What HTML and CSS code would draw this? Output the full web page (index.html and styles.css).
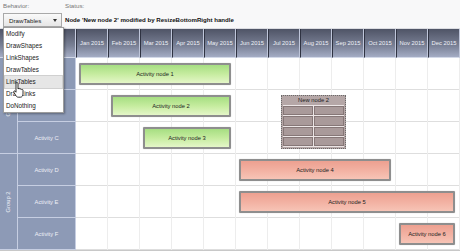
FILE: index.html
```html
<!DOCTYPE html>
<html lang="en">
<head>
    <meta charset="UTF-8">
    <meta name="viewport" content="width=device-width, initial-scale=1.0">
    <title>Gantt Behaviors</title>
    <link rel="stylesheet" href="styles.css">
</head>
<body>
    <div class="toolbar">
        <div class="field behavior">
            <div class="label">Behavior:</div>
            <div class="select">
                <span>DrawTables</span>
                <span class="caret"></span>
                <ul class="options">
                    <li>Modify</li>
                    <li>DrawShapes</li>
                    <li>LinkShapes</li>
                    <li>DrawTables</li>
                    <li class="hover">LinkTables</li>
                    <li>DrawLinks</li>
                    <li>DoNothing</li>
                </ul>
            </div>
        </div>
        <div class="field status">
            <div class="label">Status:</div>
            <div class="status-text">Node 'New node 2' modified by ResizeBottomRight handle</div>
        </div>
    </div>

    <div class="chart">
        <div class="head">
            <div class="corner"></div>
            <div class="month">Jan 2015</div>
            <div class="month">Feb 2015</div>
            <div class="month">Mar 2015</div>
            <div class="month">Apr 2015</div>
            <div class="month">May 2015</div>
            <div class="month">Jun 2015</div>
            <div class="month">Jul 2015</div>
            <div class="month">Aug 2015</div>
            <div class="month">Sep 2015</div>
            <div class="month">Oct 2015</div>
            <div class="month">Nov 2015</div>
            <div class="month">Dec 2015</div>
        </div>
        <div class="body">
            <div class="groups">
                <div class="group"><span>Group 1</span></div>
                <div class="group"><span>Group 2</span></div>
            </div>
            <div class="activities">
                <div class="activity">Activity A</div>
                <div class="activity">Activity B</div>
                <div class="activity">Activity C</div>
                <div class="activity">Activity D</div>
                <div class="activity">Activity E</div>
                <div class="activity">Activity F</div>
            </div>
            <div class="canvas">
                <div class="node green n1">Activity node 1</div>
                <div class="node green n2">Activity node 2</div>
                <div class="node green n3">Activity node 3</div>
                <div class="node red n4">Activity node 4</div>
                <div class="node red n5">Activity node 5</div>
                <div class="node red n6">Activity node 6</div>

                <div class="table-node">
                    <div class="table-title">New node 2</div>
                    <div class="table-cells">
                        <div></div><div></div>
                        <div></div><div></div>
                        <div></div><div></div>
                        <div></div><div></div>
                    </div>
                </div>
            </div>
        </div>
    </div>

    <svg class="cursor" width="11" height="16" viewBox="0 0 11 16">
        <path d="M3 1.6a1 1 0 0 1 2 0V7l.3-.3a1 1 0 0 1 1.6.5a1 1 0 0 1 1.5.3a1 1 0 0 1 1.6.7V12c0 1.6-1 3.2-2.6 3.2H5.2c-1 0-1.8-.7-2.4-1.7L.8 10.2c-.5-.9.6-1.700 1.3-1L3 10.2Z" fill="#fff" stroke="#000" stroke-width=".8" stroke-linejoin="round"/>
    </svg>
</body>
</html>
```

FILE: styles.css
```css
body {
    margin: 0;
    width: 460px;
    height: 251px;
    overflow: hidden;
    position: relative;
    background: #fff;
    font-family: "Liberation Sans", Arial, sans-serif;
}
.toolbar {
    display: flex;
    height: 28px;
    background: #f8f8f9;
    border-bottom: 1px solid #dcdde2;
}
.field {
    display: flex;
    flex-direction: column;
    padding: 2px 0 0 3px;
}
.behavior { width: 59px; }
.label {
    font-size: 6.2px;
    line-height: 8px;
    color: #777;
}
.select {
    position: relative;
    display: flex;
    align-items: center;
    justify-content: space-between;
    height: 12px;
    margin-top: 3px;
    padding: 0 4px 0 5px;
    border: 1px solid #a9a9a9;
    background: linear-gradient(#fafafa, #e6e6e6);
    font-size: 6.2px;
    color: #222;
    z-index: 2;
}
.caret {
    width: 0;
    height: 0;
    border-left: 2px solid transparent;
    border-right: 2px solid transparent;
    border-top: 3px solid #333;
}
.options {
    position: absolute;
    top: 13px;
    left: -1px;
    width: 59px;
    margin: 0;
    padding: 0;
    list-style: none;
    background: #fff;
    border: 1px solid #9c9c9c;
    box-shadow: 1px 1px 2px rgba(0, 0, 0, 0.35);
}
.options li {
    height: 12px;
    line-height: 12px;
    padding-left: 2px;
    font-size: 6.3px;
    color: #222;
}
.options li.hover {
    margin: 0 1px;
    padding-left: 1px;
    background: #e6e6e6;
    outline: 1px solid #d0d0d0;
}
.status { padding-left: 3px; }
.status-text {
    margin-top: 6px;
    font-size: 6.1px;
    font-weight: bold;
    color: #111;
}

.chart {
    display: flex;
    flex-direction: column;
}
.head {
    display: flex;
    height: 29px;
}
.corner, .month {
    background: linear-gradient(#4f5466, #7a8196 60%, #a4acc4);
    border-bottom: 1px solid #d3d9e8;
    box-sizing: border-box;
}
.corner {
    width: 76px;
    border-right: 1px solid #c7cde0;
}
.month {
    width: 32px;
    display: flex;
    align-items: center;
    justify-content: center;
    border-left: 1px solid #2f3342;
    border-right: 1px solid #bfc6da;
    font-size: 5.8px;
    color: #eef0f7;
}
.body {
    display: flex;
    height: 192px;
    border-bottom: 1px solid #c8c8c8;
}
.groups {
    width: 18px;
    display: flex;
    flex-direction: column;
}
.group {
    height: 96px;
    box-sizing: border-box;
    background: #8d9ab6;
    border-right: 1px solid #c6cee2;
    border-bottom: 1px solid #c6cee2;
    display: flex;
    align-items: center;
    justify-content: center;
}
.group span {
    transform: rotate(-90deg);
    white-space: nowrap;
    font-size: 5.8px;
    color: #eef0f7;
}
.activities {
    width: 58px;
    display: flex;
    flex-direction: column;
}
.activity {
    height: 32px;
    box-sizing: border-box;
    background: #8d9ab6;
    border-bottom: 1px solid #c6cee2;
    border-right: 1px solid #c6cee2;
    display: flex;
    align-items: center;
    justify-content: center;
    font-size: 5.8px;
    color: #eef0f7;
}
.canvas {
    position: relative;
    display: grid;
    grid-template-columns: repeat(12, 32px);
    grid-template-rows: repeat(6, 32px);
    background-image:
        linear-gradient(to right, transparent 31px, #ededed 31px),
        linear-gradient(to bottom, transparent 31px, #dedede 31px);
    background-size: 32px 32px;
}
.node {
    margin: 5px 5px 5px 3px;
    border: 2px solid #8e8e8e;
    border-radius: 1px;
    display: flex;
    align-items: center;
    justify-content: center;
    font-size: 5.8px;
    color: #222;
    box-shadow: 0 0 1px rgba(0, 0, 0, 0.3);
}
.green { background: linear-gradient(#a6de82, #c6ec9f 50%, #e4f6c8); }
.red { background: linear-gradient(#eda090, #f2b1a2 50%, #f7c4b6); }
.n1 { grid-column: 1 / 6; grid-row: 1; }
.n2 { grid-column: 2 / 6; grid-row: 2; }
.n3 { grid-column: 3 / 6; grid-row: 3; }
.n4 { grid-column: 6 / 11; grid-row: 4; }
.n5 { grid-column: 6 / 13; grid-row: 5; }
.n6 { grid-column: 11 / 13; grid-row: 6; }

.table-node {
    position: absolute;
    left: 205px;
    top: 37px;
    width: 65px;
    height: 54px;
    box-sizing: border-box;
    border: 1px dotted #6a6a6a;
    background: #b5a7a7;
    padding: 0 1px 1px;
    display: flex;
    flex-direction: column;
}
.table-title {
    height: 9px;
    line-height: 9px;
    text-align: center;
    font-size: 5.8px;
    color: #222;
}
.table-cells {
    flex: 1;
    display: grid;
    grid-template-columns: 1fr 1fr;
    grid-template-rows: repeat(4, 1fr);
    gap: 1px;
    background: #ece6e6;
    padding: 1px 0;
}
.table-cells div {
    background: #a99a9a;
    border: 1px solid #867777;
}
.cursor {
    position: absolute;
    left: 13px;
    top: 82px;
    z-index: 3;
}
```
